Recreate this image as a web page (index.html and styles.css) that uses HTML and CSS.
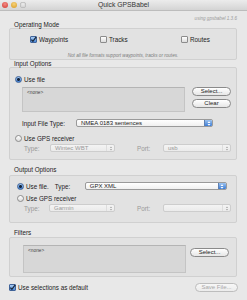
FILE: index.html
```html
<!DOCTYPE html>
<html lang="en">
<head>
    <meta charset="UTF-8">
    <title>Quick GPSBabel</title>
    <link rel="stylesheet" href="styles.css">
</head>
<body>
    <div class="window">
        <div class="titlebar">
            <div class="lights">
                <span class="light red"></span>
                <span class="light yellow"></span>
                <span class="light off"></span>
            </div>
            <div class="title">Quick GPSBabel</div>
            <div></div>
        </div>

        <div class="content">
            <div class="version">using gpsbabel 1.3.6</div>

            <!-- Operating mode -->
            <div class="group-label">Operating Mode</div>
            <div class="box mode-box">
                <div class="mode-row">
                    <label class="option"><span class="checkbox on"><svg viewBox="0 0 7 7" width="7" height="7"><path d="M1.3 3.6 L2.9 5.3 L6.2 0.8" fill="none" stroke="#1b2a3d" stroke-width="1.3"/></svg></span>Waypoints</label>
                    <label class="option"><span class="checkbox"></span>Tracks</label>
                    <label class="option"><span class="checkbox"></span>Routes</label>
                </div>
                <div class="note">Not all file formats support waypoints, tracks or routes.</div>
            </div>

            <!-- Input -->
            <div class="group-label">Input Options</div>
            <div class="box input-box">
                <label class="option row"><span class="radio on"></span>Use file</label>
                <div class="file-area">
                    <div class="list">&lt;none&gt;</div>
                    <div class="buttons">
                        <div class="btn">Select...</div>
                        <div class="btn">Clear</div>
                    </div>
                </div>
                <div class="type-row">
                    <span class="type-label">Input File Type:</span>
                    <div class="popup wide">
                        <span class="value">NMEA 0183 sentences</span>
                        <span class="arrows"><svg viewBox="0 0 6 7" width="6" height="7"><path d="M1.5 3 L3 1.3 L4.5 3 Z M1.5 4 L3 5.7 L4.5 4 Z" fill="#fff"/></svg></span>
                    </div>
                </div>
                <label class="option row gps"><span class="radio"></span>Use GPS receiver</label>
                <div class="device-row">
                    <span class="dim-label">Type:</span>
                    <div class="popup off small">
                        <span class="value">Wintec WBT</span>
                        <span class="arrows"><svg viewBox="0 0 6 7" width="6" height="7"><path d="M1.8 3 L3 1.6 L4.2 3 Z M1.8 4 L3 5.4 L4.2 4 Z" fill="#aaa"/></svg></span>
                    </div>
                    <span class="dim-label port">Port:</span>
                    <div class="popup off port-popup">
                        <span class="value">usb</span>
                        <span class="arrows"><svg viewBox="0 0 6 7" width="6" height="7"><path d="M1.8 3 L3 1.6 L4.2 3 Z M1.8 4 L3 5.4 L4.2 4 Z" fill="#aaa"/></svg></span>
                    </div>
                </div>
            </div>

            <!-- Output -->
            <div class="group-label out-label">Output Options</div>
            <div class="box output-box">
                <div class="out-row">
                    <label class="option"><span class="radio on"></span>Use file.</label>
                    <span class="out-type">Type:</span>
                    <div class="popup out-popup">
                        <span class="value">GPX XML</span>
                        <span class="arrows"><svg viewBox="0 0 6 7" width="6" height="7"><path d="M1.5 3 L3 1.3 L4.5 3 Z M1.5 4 L3 5.7 L4.5 4 Z" fill="#fff"/></svg></span>
                    </div>
                </div>
                <label class="option row gps out-gps"><span class="radio"></span>Use GPS receiver</label>
                <div class="device-row">
                    <span class="dim-label">Type:</span>
                    <div class="popup off small">
                        <span class="value">Garmin</span>
                        <span class="arrows"><svg viewBox="0 0 6 7" width="6" height="7"><path d="M1.8 3 L3 1.6 L4.2 3 Z M1.8 4 L3 5.4 L4.2 4 Z" fill="#aaa"/></svg></span>
                    </div>
                    <span class="dim-label port">Port:</span>
                    <div class="popup off port-popup">
                        <span class="value"></span>
                        <span class="arrows"><svg viewBox="0 0 6 7" width="6" height="7"><path d="M1.8 3 L3 1.6 L4.2 3 Z M1.8 4 L3 5.4 L4.2 4 Z" fill="#aaa"/></svg></span>
                    </div>
                </div>
            </div>

            <!-- Filters -->
            <div class="group-label filter-label">Filters</div>
            <div class="box filter-box">
                <div class="list tall">&lt;none&gt;</div>
                <div class="btn">Select...</div>
            </div>

            <div class="bottom-row">
                <label class="option"><span class="checkbox on"><svg viewBox="0 0 7 7" width="7" height="7"><path d="M1.3 3.6 L2.9 5.3 L6.2 0.8" fill="none" stroke="#1b2a3d" stroke-width="1.3"/></svg></span>Use selections as default</label>
                <div class="btn disabled save">Save File...</div>
            </div>
        </div>
    </div>
</body>
</html>
```

FILE: styles.css
```css
* {
    box-sizing: border-box;
}
body {
    margin: 0;
    font-family: "Liberation Sans", Arial, sans-serif;
    font-size: 6.3px;
    color: #222;
}
.window {
    width: 247px;
    height: 300px;
    background: #e8e8e8;
    overflow: hidden;
}

/* title bar */
.titlebar {
    height: 11px;
    border-bottom: 1px solid #bcbcbc;
    background: linear-gradient(#ececec, #d4d4d4);
    display: grid;
    grid-template-columns: 1fr auto 1fr;
    align-items: center;
}
.lights {
    display: flex;
    gap: 3px;
    padding-left: 2px;
}
.light {
    width: 6px;
    height: 6px;
    border-radius: 50%;
}
.light.red {
    background: radial-gradient(circle at 50% 35%, #f38b84, #d2372f);
}
.light.yellow {
    background: radial-gradient(circle at 50% 35%, #f6d27a, #d89a1f);
}
.light.off {
    background: radial-gradient(circle at 50% 35%, #ececec, #c3c3c3);
    box-shadow: inset 0 0 0 0.5px #b0b0b0;
}
.title {
    font-size: 6.8px;
    color: #333;
    line-height: 10px;
}

.content {
    padding: 0 10px 0 9px;
}
.version {
    text-align: right;
    font-style: italic;
    font-size: 4.6px;
    color: #9a9a9a;
    line-height: 5px;
    margin-top: 5px;
}

/* group boxes */
.group-label {
    line-height: 7px;
    padding-left: 5px;
}
.box {
    border: 1px solid #d0d0d0;
    background: #e2e2e2;
    border-radius: 2px;
}
.option {
    display: flex;
    align-items: center;
    gap: 2px;
    height: 8px;
    white-space: nowrap;
}
.checkbox {
    width: 7px;
    height: 7px;
    border: 1px solid #8c8c8c;
    border-radius: 1px;
    background: linear-gradient(#fff, #dcdcdc);
    display: flex;
    align-items: center;
    justify-content: center;
    overflow: visible;
}
.checkbox.on {
    border-color: #41649a;
    background: linear-gradient(#a9cbf3, #4a8ad9);
}
.checkbox svg {
    flex: none;
}
.radio {
    width: 7px;
    height: 7px;
    border: 1px solid #8c8c8c;
    border-radius: 50%;
    background: linear-gradient(#fff, #dcdcdc);
}
.radio.on {
    border-color: #3f6397;
    background: radial-gradient(circle, #15243a 0 1.2px, transparent 1.7px), linear-gradient(#a4c8f2, #3d7fd6);
}

.mode-box {
    height: 32px;
    padding-top: 6px;
}
.mode-row {
    display: grid;
    grid-template-columns: 70px 81px 1fr;
    padding-left: 20px;
}
.note {
    text-align: center;
    font-style: italic;
    font-size: 4.6px;
    color: #7a7a7a;
    line-height: 5px;
    margin-top: 10px;
}

/* lists and buttons */
.list {
    width: 163px;
    height: 25px;
    background: #d7d7d7;
    border: 1px solid #c4c4c4;
    border-top-color: #b4b4b4;
    padding: 2px 4px;
    font-size: 4.8px;
    color: #444;
}
.list.tall {
    height: 28px;
    margin-left: 8px;
}
.btn {
    width: 39px;
    height: 9px;
    border: 1px solid #8a8a8a;
    border-radius: 5px;
    background: linear-gradient(#ffffff, #e6e6e6);
    text-align: center;
    line-height: 7px;
    font-size: 6px;
    color: #222;
}
.btn.disabled {
    border-color: #bdbdbd;
    color: #a8a8a8;
    background: linear-gradient(#f7f7f7, #ececec);
}

/* popup menus */
.popup {
    display: flex;
    align-items: center;
    height: 8px;
    border: 1px solid #9a9a9a;
    border-radius: 2px;
    background: linear-gradient(#ffffff, #f0f0f0);
    overflow: hidden;
}
.popup .value {
    flex: 1;
    padding-left: 4px;
    font-size: 6px;
    line-height: 6px;
    white-space: nowrap;
}
.popup .arrows {
    width: 8px;
    height: 100%;
    display: flex;
    align-items: center;
    justify-content: center;
    background: linear-gradient(#9cc3f0, #3b7bd4);
    border-left: 1px solid #5d80b3;
}
.popup.off {
    border-color: #cdcdcd;
    background: linear-gradient(#f4f4f4, #ebebeb);
}
.popup.off .value {
    color: #9a9a9a;
}
.popup.off .arrows {
    background: none;
    border-left: 1px solid #dddddd;
}

/* input */
.input-box {
    padding: 7px 0 7px 5px;
}
.file-area {
    display: flex;
    gap: 7px;
    margin: 4px 0 0 7px;
}
.buttons {
    display: flex;
    flex-direction: column;
    gap: 3px;
}
.type-row {
    display: flex;
    align-items: center;
    height: 8px;
    margin: 7px 0 0 7px;
}
.type-label {
    width: 54px;
}
.popup.wide {
    width: 137px;
}
.row.gps {
    margin-top: 7px;
}
.device-row {
    display: flex;
    align-items: center;
    height: 8px;
    margin: 2px 0 0 9px;
}
.dim-label {
    width: 26px;
    color: #999;
}
.dim-label.port {
    margin-left: 22px;
}
.popup.small {
    width: 65px;
}
.popup.port-popup {
    width: 68px;
}

/* output */
.out-label {
    margin-top: 6px;
}
.output-box {
    margin-top: 2px;
    padding: 6px 0 10px 5px;
}
.out-row {
    display: flex;
    align-items: center;
    height: 8px;
    padding-left: 2px;
}
.out-type {
    margin-left: 6px;
    width: 30px;
}
.popup.out-popup {
    width: 142px;
}
.row.out-gps {
    margin-top: 4px;
    padding-left: 2px;
}
.output-box .device-row .popup.small {
    width: 66px;
}
.output-box .device-row .dim-label:first-child {
    width: 25px;
}

/* filters */
.filter-label {
    margin-top: 6px;
}
.filter-box {
    margin-top: 1px;
    padding: 7px 0 3px 5px;
    display: flex;
    align-items: flex-start;
    gap: 4px;
}
.filter-box .btn {
    margin-top: 3px;
}

.bottom-row {
    display: flex;
    align-items: center;
    height: 9px;
    margin-top: 6px;
    margin-right: -1px;
}
.btn.save {
    width: 43px;
    margin-left: auto;
}
```
